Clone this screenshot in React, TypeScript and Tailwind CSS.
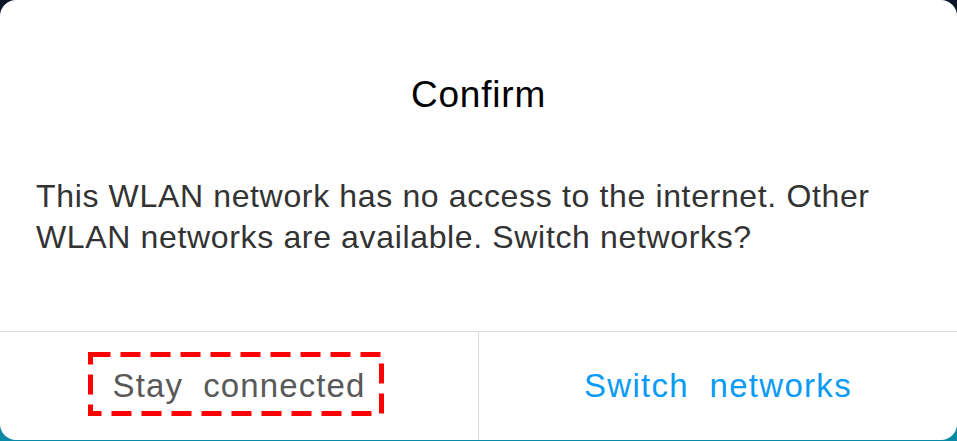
export default function App() {
  return (
    <div className="w-[957px] h-[441px] bg-gradient-to-b from-[#0b1526] to-[#0a8aa8] overflow-hidden font-['Liberation_Sans',Arial,sans-serif]">
      <div className="h-[440px] bg-white rounded-[16px] flex flex-col">
        <h1 className="pt-[74px] text-center text-[37px] leading-[42px] tracking-[0.8px] text-black">Confirm</h1>
        <p className="mt-[60px] px-[36px] text-[32px] leading-[41px] tracking-[0.65px] text-[#333333]">
          This WLAN network has no access to the internet. Other WLAN networks are available. Switch networks?
        </p>
        <div className="mt-auto h-[109px] border-t border-[#dcdcdc] flex">
          <button className="relative flex-1 flex items-center justify-center text-[33px] tracking-[1.1px] text-[#595959] [word-spacing:10px]">
            Stay connected
            <svg className="absolute left-[88px] top-[20px]" width="296" height="64" viewBox="0 0 296 64">
              <rect
                x="2.5"
                y="2.5"
                width="291"
                height="59"
                fill="none"
                stroke="#ff0000"
                strokeWidth="5"
                strokeDasharray="20 10"
              />
            </svg>
          </button>
          <div className="w-px bg-[#dcdcdc]" />
          <button className="flex-1 flex items-center justify-center text-[33px] tracking-[1.3px] text-[#0a9bf5] [word-spacing:10px]">
            Switch networks
          </button>
        </div>
      </div>
    </div>
  );
}
